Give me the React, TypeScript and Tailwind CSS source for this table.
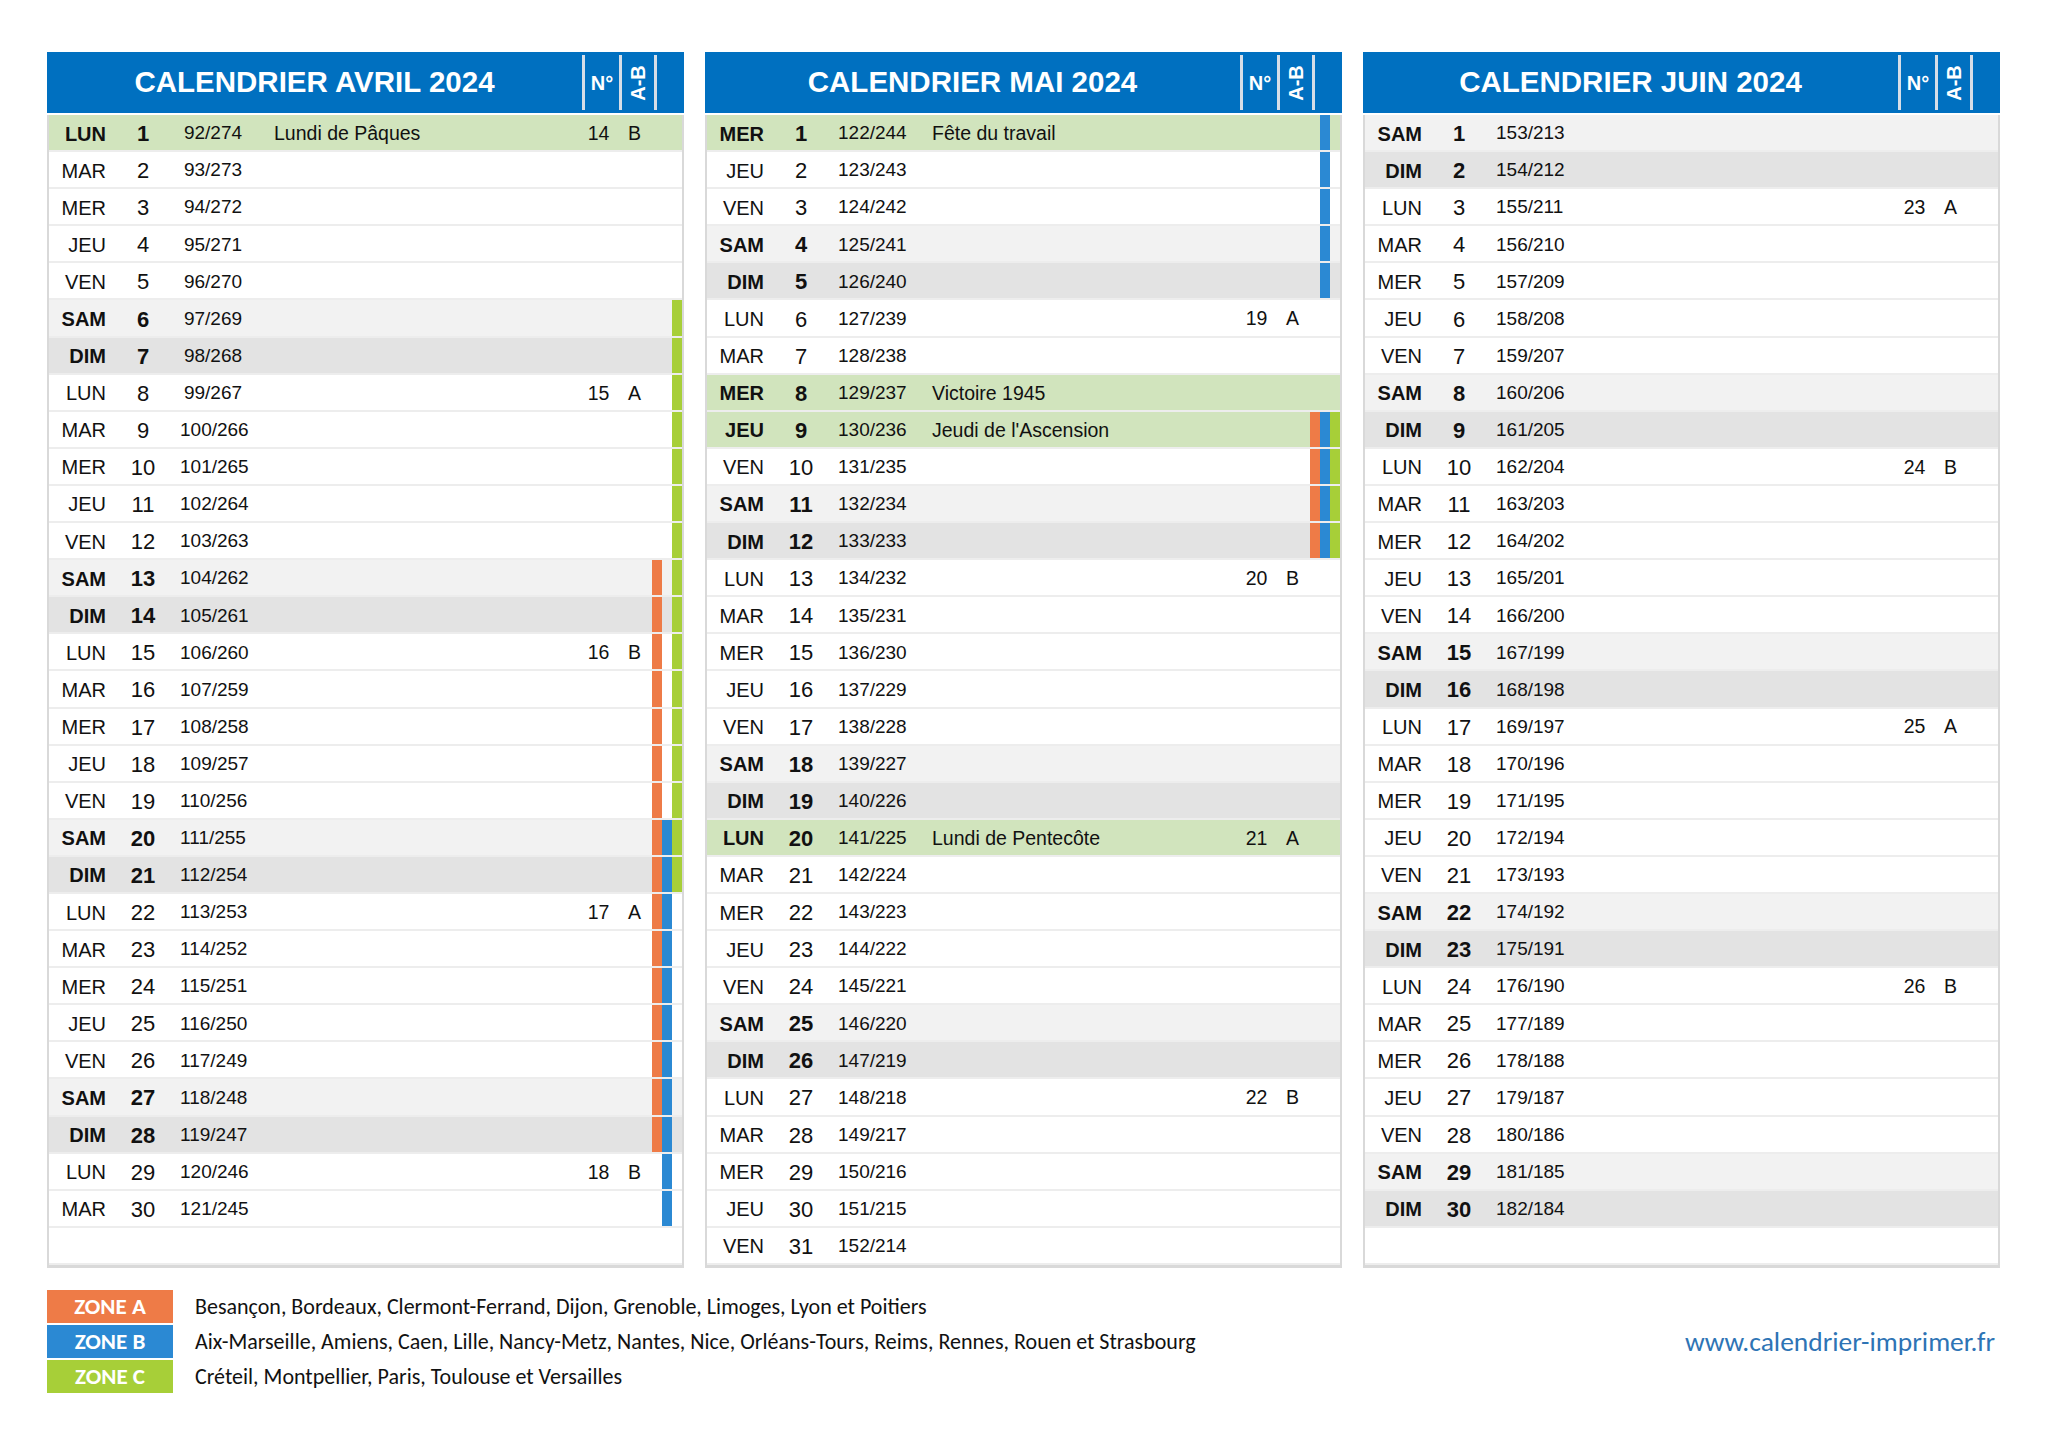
import React from "react";

const DAY_NAMES = ["LUN", "MAR", "MER", "JEU", "VEN", "SAM", "DIM"];

interface Month {
  title: string;
  firstDow: number;
  days: number;
  firstDoy: number;
  holidays: Record<number, string>;
  zones: { a: number[][]; b: number[][]; c: number[][] };
}

const MONTHS: Month[] = [
  {
    title: "CALENDRIER AVRIL 2024",
    firstDow: 0,
    days: 30,
    firstDoy: 92,
    holidays: { 1: "Lundi de Pâques" },
    zones: { a: [[13, 28]], b: [[20, 30]], c: [[6, 21]] },
  },
  {
    title: "CALENDRIER MAI 2024",
    firstDow: 2,
    days: 31,
    firstDoy: 122,
    holidays: {
      1: "Fête du travail",
      8: "Victoire 1945",
      9: "Jeudi de l'Ascension",
      20: "Lundi de Pentecôte",
    },
    zones: { a: [[9, 12]], b: [[1, 5], [9, 12]], c: [[9, 12]] },
  },
  {
    title: "CALENDRIER JUIN 2024",
    firstDow: 5,
    days: 30,
    firstDoy: 153,
    holidays: {},
    zones: { a: [], b: [], c: [] },
  },
];

const inRange = (ranges: number[][], d: number) => ranges.some(([s, e]) => d >= s && d <= e);

function Row({ month, day }: { month: Month; day: number }) {
  if (day > month.days) {
    return <div className="h-[37.1px] border-b-2 border-[#ededed] bg-white" />;
  }
  const dow = (month.firstDow + day - 1) % 7;
  const doy = month.firstDoy + day - 1;
  const holiday = month.holidays[day];
  const weekend = dow >= 5;
  const bold = weekend || !!holiday;
  const bg = holiday ? "bg-[#d1e4bd]" : dow === 6 ? "bg-[#e3e3e3]" : dow === 5 ? "bg-[#f2f2f2]" : "bg-white";
  // 1 janvier 2024 est un lundi : semaine ISO = (quantième - 1) / 7 + 1
  const week = dow === 0 ? Math.floor((doy - 1) / 7) + 1 : null;

  return (
    <div
      className={`grid h-[37.1px] grid-cols-[57px_74px_66px_1fr_37px_35px_10px_10px_10px] items-center border-b-2 border-[#ededed] pt-[2px] text-[#111] ${bg}`}
    >
      <span className={`text-right text-[20px] ${bold ? "font-bold" : ""}`}>{DAY_NAMES[dow]}</span>
      <span className={`text-center text-[22px] ${bold ? "font-bold" : ""}`}>{day}</span>
      <span className="text-center text-[19px]">
        {doy}/{366 - doy}
      </span>
      <span className="pl-[28px] text-[19.5px]">{holiday ?? ""}</span>
      <span className="text-center text-[19.5px]">{week ?? ""}</span>
      <span className="text-center text-[19.5px]">{week ? (week % 2 === 0 ? "B" : "A") : ""}</span>
      <span className={`-mt-[2px] h-[calc(100%+2px)] ${inRange(month.zones.a, day) ? "bg-[#ee7b47]" : ""}`} />
      <span className={`-mt-[2px] h-[calc(100%+2px)] ${inRange(month.zones.b, day) ? "bg-[#2b89d3]" : ""}`} />
      <span className={`-mt-[2px] h-[calc(100%+2px)] ${inRange(month.zones.c, day) ? "bg-[#a7cf38]" : ""}`} />
    </div>
  );
}

function Panel({ month }: { month: Month }) {
  return (
    <div className="flex w-[637px] flex-col border-x-2 border-b-[3px] border-[#d9d9d9]">
      <div className="-mx-[2px] flex h-[63px] border-b-2 border-white bg-[#0070c0] text-white">
        <div className="flex flex-1 items-center justify-center text-[29.5px] font-bold">{month.title}</div>
        <div className="my-[3px] flex w-[37px] items-center justify-center border-l-[3px] border-[#d6dee8] text-[20px] font-bold">
          N°
        </div>
        <div className="my-[3px] flex w-[35px] items-center justify-center border-l-[3px] border-[#d6dee8]">
          <span className="-rotate-90 whitespace-nowrap text-[20px] font-bold">A-B</span>
        </div>
        <div className="my-[3px] w-[30px] border-l-[3px] border-[#d6dee8]" />
      </div>
      {Array.from({ length: 31 }, (_, i) => (
        <Row key={i} month={month} day={i + 1} />
      ))}
    </div>
  );
}

const ZONES = [
  { label: "ZONE A", color: "bg-[#ee7b47]", text: "Besançon, Bordeaux, Clermont-Ferrand, Dijon, Grenoble, Limoges, Lyon et Poitiers" },
  {
    label: "ZONE B",
    color: "bg-[#2b89d3]",
    text: "Aix-Marseille, Amiens, Caen, Lille, Nancy-Metz, Nantes, Nice, Orléans-Tours, Reims, Rennes, Rouen et Strasbourg",
  },
  { label: "ZONE C", color: "bg-[#a7cf38]", text: "Créteil, Montpellier, Paris, Toulouse et Versailles" },
];

export default function App() {
  return (
    <div className="h-[1448px] w-[2048px] bg-white pl-[47px] pt-[52px] font-['Liberation_Sans',Arial,sans-serif]">
      <div className="flex gap-[21px]">
        {MONTHS.map((m) => (
          <Panel key={m.title} month={m} />
        ))}
      </div>
      <div className="mt-[22px] flex w-[1948px] items-center justify-between font-['Carlito','Lato',sans-serif]">
        <div className="flex flex-col gap-[2px]">
          {ZONES.map((z) => (
            <div key={z.label} className="flex h-[33px] items-center">
              <div className={`flex h-full w-[126px] items-center justify-center text-[23px] font-semibold text-white ${z.color}`}>
                {z.label}
              </div>
              <span className="pl-[22px] text-[22px] text-[#111]">{z.text}</span>
            </div>
          ))}
        </div>
        <span className="text-[27.5px] text-[#2e74b5]">www.calendrier-imprimer.fr</span>
      </div>
    </div>
  );
}
